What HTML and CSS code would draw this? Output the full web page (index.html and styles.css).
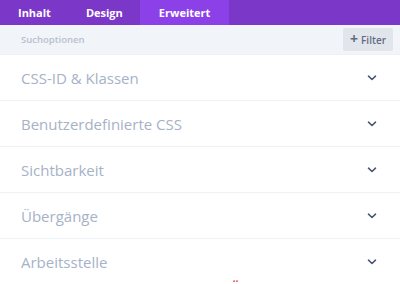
FILE: index.html
```html
<!DOCTYPE html>
<html lang="de">
<head>
<meta charset="utf-8">
<link rel="stylesheet" href="styles.css">
</head>
<body>
<div class="panel">
  <nav class="tabs">
    <span class="tab">Inhalt</span>
    <span class="tab">Design</span>
    <span class="tab active">Erweitert</span>
  </nav>
  <div class="search">
    <span class="search-label">Suchoptionen</span>
    <button class="filter"><span class="plus">+</span> Filter</button>
  </div>
  <ul class="rows">
    <li class="row"><span>CSS-ID &amp; Klassen</span><svg class="chev" viewBox="0 0 10 6"><path d="M1.5 1.2l3.5 3.3 3.5-3.3"/></svg></li>
    <li class="row"><span>Benutzerdefinierte CSS</span><svg class="chev" viewBox="0 0 10 6"><path d="M1.5 1.2l3.5 3.3 3.5-3.3"/></svg></li>
    <li class="row"><span>Sichtbarkeit</span><svg class="chev" viewBox="0 0 10 6"><path d="M1.5 1.2l3.5 3.3 3.5-3.3"/></svg></li>
    <li class="row"><span>Übergänge</span><svg class="chev" viewBox="0 0 10 6"><path d="M1.5 1.2l3.5 3.3 3.5-3.3"/></svg></li>
    <li class="row"><span>Arbeitsstelle</span><svg class="chev" viewBox="0 0 10 6"><path d="M1.5 1.2l3.5 3.3 3.5-3.3"/></svg></li>
  </ul>
  <span class="peek">Ü</span>
</div>
</body>
</html>
```
FILE: styles.css
```css
* { box-sizing: border-box; margin: 0; padding: 0; }
html, body { width: 400px; height: 284px; overflow: hidden; background: #fff; }
body { font-family: "Open Sans", "Noto Sans", sans-serif; }
.panel { position: relative; width: 400px; height: 284px; overflow: hidden; }
.tabs { display: flex; height: 25px; background: #7b37c8; }
.tab { display: flex; align-items: center; padding: 0 18px; color: #fff; font-size: 11px; font-weight: 700; height: 25px; }
.tab:nth-child(2) { padding: 0 17px 0 17px; }
.tab.active { background: #8c41e8; padding: 0 19px 0 19px; }
.search { display: flex; align-items: center; justify-content: space-between; height: 30px; background: #f1f4f8; padding: 0 7px 0 21px; border-bottom: 1px solid #eef1f5; }
.search-label { font-size: 9.5px; font-weight: 600; color: #b7c0cd; }
.filter { border: 0; background: #e2e6ec; color: #5f6b7e; font-family: inherit; font-size: 10px; font-weight: 600; height: 23px; width: 50px; border-radius: 2px; display: flex; align-items: center; justify-content: center; gap: 3px; }
.plus { font-size: 14px; font-weight: 700; line-height: 1; margin-top: -1px; }
.rows { list-style: none; }
.row { display: flex; align-items: center; justify-content: space-between; height: 46px; padding: 0 23px 0 21px; border-bottom: 1px solid #eef1f5; font-size: 15px; color: #a6b2c7; }
.chev { width: 10px; height: 6px; fill: none; stroke: #4c5870; stroke-width: 1.6; stroke-linecap: round; stroke-linejoin: round; }
.peek { position: absolute; left: 230px; top: 281px; color: #e83a3a; font-size: 15px; font-weight: 600; line-height: 1; }
```
